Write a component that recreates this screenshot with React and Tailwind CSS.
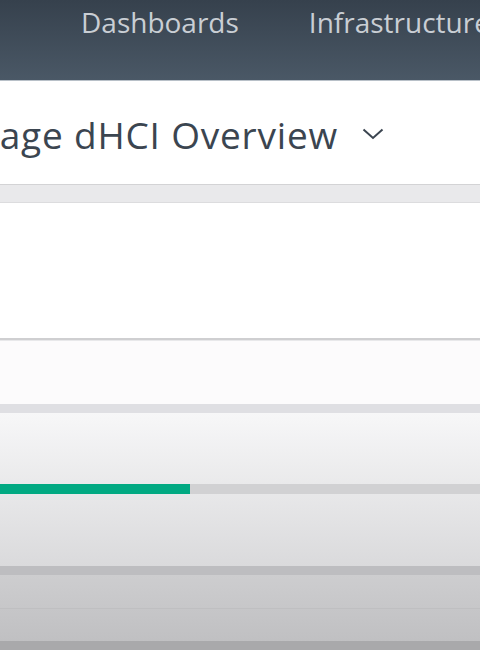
export default function App() {
  const font = { fontFamily: '"Open Sans", "Noto Sans", sans-serif' };
  return (
    <div className="w-[480px] h-[650px] overflow-hidden flex flex-col bg-white" style={font}>
      {/* header */}
      <div className="h-[80px] shrink-0 bg-gradient-to-b from-[#36414d] to-[#4a5866] flex items-start pt-[8px] pl-[81px] gap-[70px] whitespace-nowrap overflow-hidden">
        <span className="text-[28px] leading-none text-[#c9ced4]">Dashboards</span>
        <span className="text-[28px] leading-none text-[#c9ced4]">Infrastructure</span>
      </div>
      <div className="h-[1px] shrink-0 bg-[#b8c0c8]" />
      {/* title */}
      <div className="h-[103px] shrink-0 bg-white flex items-start pt-[35px]">
        <div className="w-[338px] shrink-0 flex justify-end whitespace-nowrap">
          <span className="text-[37px] leading-none tracking-[0.8px] text-[#3b4550]">age dHCI Overview</span>
        </div>
        <svg className="ml-[24px] mt-[12px]" width="22" height="12" viewBox="0 0 22 12" fill="none">
          <polyline points="1.5,1.5 11,10 20.5,1.5" stroke="#3b4550" strokeWidth="2" />
        </svg>
      </div>
      {/* band */}
      <div className="h-[19px] shrink-0 bg-[#e9e9eb] border-t border-[#d3d3d5] border-b border-b-[#dcdcde]" />
      {/* white panel */}
      <div className="h-[135px] shrink-0 bg-white" />
      <div className="h-[2px] shrink-0 bg-[#cfcfd1]" />
      <div className="h-[1px] shrink-0 bg-[#e8e8ea]" />
      <div className="h-[63px] shrink-0 bg-[#fcfbfc]" />
      <div className="h-[9px] shrink-0 bg-[#dfdfe3]" />
      {/* gradient section with progress */}
      <div className="h-[153px] shrink-0 bg-gradient-to-b from-[#f7f7f8] to-[#dadadc] pt-[71px]">
        <div className="h-[10px] flex">
          <div className="w-[190px] bg-[#01a982]" />
          <div className="flex-1 bg-[#d1d1d3]" />
        </div>
      </div>
      <div className="h-[9px] shrink-0 bg-[#bdbdc0]" />
      <div className="h-[33px] shrink-0 bg-gradient-to-b from-[#cdcdcf] to-[#c7c7c9]" />
      <div className="h-[1px] shrink-0 bg-[#bfbfc1]" />
      <div className="h-[32px] shrink-0 bg-gradient-to-b from-[#c6c6c8] to-[#c0c0c2]" />
      <div className="flex-1 bg-[#a9a9ab]" />
    </div>
  );
}
